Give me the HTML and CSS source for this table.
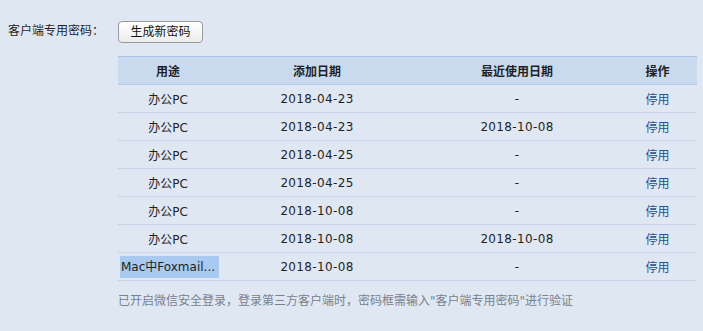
FILE: index.html
```html
<!DOCTYPE html>
<html lang="zh-CN">
<head>
<meta charset="utf-8">
<link rel="stylesheet" href="styles.css">
</head>
<body>
<div class="page">
  <div class="label">客户端专用密码：</div>
  <div class="content">
    <button class="btn">生成新密码</button>
    <table class="pw-table">
      <thead>
        <tr><th class="c1">用途</th><th class="c2">添加日期</th><th class="c3">最近使用日期</th><th class="c4">操作</th></tr>
      </thead>
      <tbody>
        <tr><td>办公PC</td><td class="date">2018-04-23</td><td class="date">-</td><td><a class="link">停用</a></td></tr>
        <tr><td>办公PC</td><td class="date">2018-04-23</td><td class="date">2018-10-08</td><td><a class="link">停用</a></td></tr>
        <tr><td>办公PC</td><td class="date">2018-04-25</td><td class="date">-</td><td><a class="link">停用</a></td></tr>
        <tr><td>办公PC</td><td class="date">2018-04-25</td><td class="date">-</td><td><a class="link">停用</a></td></tr>
        <tr><td>办公PC</td><td class="date">2018-10-08</td><td class="date">-</td><td><a class="link">停用</a></td></tr>
        <tr><td>办公PC</td><td class="date">2018-10-08</td><td class="date">2018-10-08</td><td><a class="link">停用</a></td></tr>
        <tr><td class="sel-cell"><span class="sel">Mac中Foxmail...</span></td><td class="date">2018-10-08</td><td class="date">-</td><td><a class="link">停用</a></td></tr>
      </tbody>
    </table>
    <p class="note">已开启微信安全登录，登录第三方客户端时，密码框需输入"客户端专用密码"进行验证</p>
  </div>
</div>
</body>
</html>
```

FILE: styles.css
```css
html, body {
  margin: 0;
  padding: 0;
  background: #dfe7f3;
}
body {
  font-family: "DejaVu Sans", "Noto Sans CJK SC", sans-serif;
  font-size: 12px;
  color: #1f1f1f;
}
.page {
  display: flex;
  padding-top: 21px;
}
.label {
  width: 110px;
  padding-left: 8px;
  padding-top: 1px;
  line-height: 18px;
}
.content {
  width: 579px;
}
.btn {
  display: block;
  width: 85px;
  height: 22px;
  padding: 0;
  font-family: inherit;
  font-size: 12px;
  color: #111;
  background: linear-gradient(#ffffff, #ececec);
  border: 1px solid #9a9a9a;
  border-radius: 4px;
  line-height: 20px;
}
.pw-table {
  margin-top: 13px;
  width: 579px;
  border-collapse: collapse;
  table-layout: fixed;
}
.pw-table th {
  height: 27px;
  background: #cadaee;
  border-top: 1px solid #a9c3e4;
  border-bottom: 1px solid #b4cae6;
  font-weight: bold;
  padding: 0;
  text-align: center;
}
.c1 { width: 100px; }
.c2 { width: 198px; }
.c3 { width: 202px; }
.c4 { width: 79px; }
.pw-table td {
  height: 27px;
  padding: 0;
  text-align: center;
  border-bottom: 1px solid #c4d5ec;
  white-space: nowrap;
}
.pw-table td.date {
  letter-spacing: 0.35px;
}
.pw-table td.sel-cell {
  text-align: left;
  padding-left: 2px;
  vertical-align: middle;
}
.sel {
  display: inline-block;
  background: #a8c9f0;
  padding: 2px 4px 2px 1px;
  line-height: 18px;
}
.link {
  color: #24528f;
  cursor: pointer;
}
.note {
  margin: 10px 0 0;
  color: #7a818c;
  line-height: 20px;
}
```
